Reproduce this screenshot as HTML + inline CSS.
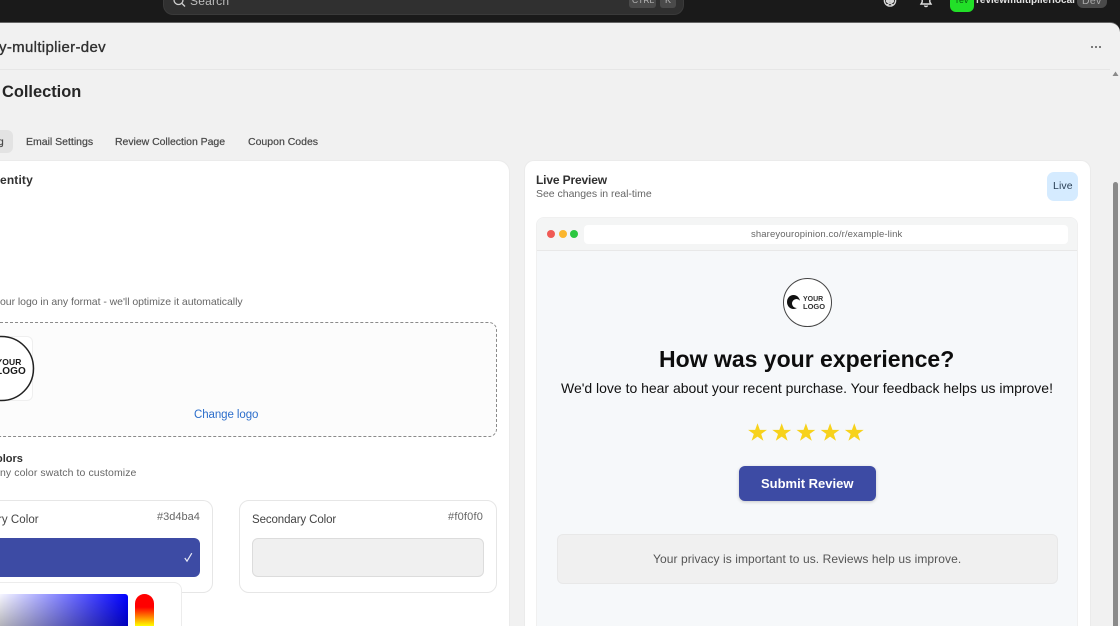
<!DOCTYPE html>
<html><head><meta charset="utf-8"><style>
html,body{margin:0;padding:0;width:1120px;height:626px;overflow:hidden;background:#1a1a1a}
body{position:relative;font-family:"Liberation Sans",sans-serif}
div,span.a{position:absolute;box-sizing:border-box}
.t{position:absolute;white-space:nowrap;line-height:1}
.card{background:#fff;border:1px solid #ebebeb}
.m{-webkit-text-stroke:.2px #484848;color:#484848}
</style></head><body>
<div style="left:0;top:0;width:1120px;height:626px;overflow:hidden;filter:blur(.3px)">
<div style="left:163px;top:0;width:521px;height:15px;background:#303030;border-radius:0 0 10px 10px;border:1px solid #3a3a3a;border-top:0"></div>
<svg style="position:absolute;left:172px;top:0" width="14" height="8" viewBox="0 6 14 8" fill="none" stroke="#d0d0d0" stroke-width="1.3"><circle cx="6.5" cy="6" r="4.5"/><path d="M10 9.5l3 3"/></svg>
<div style="left:190px;top:0;width:40px;height:10px;overflow:hidden"><span class="t" style="left:0;top:-5px;font-size:12px;color:#bdbdbd;letter-spacing:.2px">Search</span></div>
<div style="left:629px;top:0;width:27px;height:8px;background:#4a4a4a;border-radius:0 0 3px 3px;overflow:hidden"><span class="t" style="left:3px;top:-4px;font-size:8.5px;color:#b5b5b5">CTRL</span></div>
<div style="left:660px;top:0;width:16px;height:8px;background:#4a4a4a;border-radius:0 0 3px 3px;overflow:hidden"><span class="t" style="left:5px;top:-4px;font-size:9px;color:#b5b5b5">K</span></div>
<svg style="position:absolute;left:883px;top:0" width="14" height="8" viewBox="0 6 14 8" fill="none" stroke="#d8d8d8" stroke-width="1.4"><circle cx="7" cy="6.5" r="5.6"/><circle cx="5" cy="7" r="1.4" fill="#d8d8d8"/><circle cx="9" cy="7" r="1.4" fill="#d8d8d8"/><path d="M4 11l3-2 3 2"/></svg>
<svg style="position:absolute;left:919px;top:0" width="14" height="8" viewBox="0 6 14 8" fill="none" stroke="#e0e0e0" stroke-width="1.4"><path d="M3.2 5v3L2 10h10L10.800 8V5a3.800 3.800 0 0 0-7.600 0z"/><path d="M5.500 11.500a1.600 1.600 0 0 0 3 0"/></svg>
<div style="left:950px;top:0;width:24px;height:12px;background:#22e028;border-radius:0 0 6px 6px;overflow:hidden"><span class="t" style="left:6px;top:-4px;font-size:9px;color:#0a5c10">rev</span></div>
<div style="left:976px;top:0;width:100px;height:8px;overflow:hidden"><span class="t" style="left:0;top:-4px;font-size:10px;font-weight:bold;color:#e3e3e3">reviewmultiplierlocal</span></div>
<div style="left:1077px;top:0;width:30px;height:8px;background:#4a4a4a;border-radius:0 0 6px 6px;overflow:hidden"><span class="t" style="left:5px;top:-4px;font-size:10.500px;color:#aaa;letter-spacing:.3px">Dev</span></div>

<div style="left:0;top:22px;width:1120px;height:604px;background:#f1f1f1;border-radius:0 10px 0 0;border-top:1px solid #666"></div>
<div style="left:0;top:69px;width:1110px;height:1px;background:#e6e6e6"></div>
<div style="left:0;top:38px;width:120px;height:20px;overflow:hidden"><span class="t" style="left:-1px;top:2px;font-size:15px;color:#303030;-webkit-text-stroke:.35px #303030;letter-spacing:.33px">y-multiplier-dev</span></div>
<div style="left:1091px;top:46px;width:2.300px;height:2.300px;border-radius:50%;background:#555"></div>
<div style="left:1095px;top:46px;width:2.300px;height:2.300px;border-radius:50%;background:#555"></div>
<div style="left:1099px;top:46px;width:2.300px;height:2.300px;border-radius:50%;background:#555"></div>
<span class="t" style="left:2px;top:84px;font-size:16.4px;font-weight:bold;color:#262626">Collection</span>

<div style="left:0;top:130px;width:13px;height:23px;background:#e3e3e3;border-radius:0 6px 6px 0;overflow:hidden"><span class="t m" style="left:-8px;top:7px;font-size:10.5px">ng</span></div>
<span class="t m" style="left:26px;top:137px;font-size:10.5px">Email Settings</span>
<span class="t m" style="left:115px;top:137px;font-size:10.5px;letter-spacing:-.04px">Review Collection Page</span>
<span class="t m" style="left:248px;top:137px;font-size:10.5px">Coupon Codes</span>

<!-- left card -->
<div class="card" style="left:0;top:160px;width:510px;height:466px;border-radius:0 12px 0 0;border-left:0;border-bottom:0"></div>
<span class="t" style="left:0;top:174px;font-size:12px;font-weight:bold;color:#303030;letter-spacing:.15px">entity</span>
<span class="t" style="left:0;top:297px;font-size:10.500px;color:#666;letter-spacing:-.05px">our logo in any format - we'll optimize it automatically</span>
<div style="left:0;top:322px;width:497px;height:115px;background:#fcfcfc;border:1px dashed #8a8a8a;border-left:0;border-radius:0 8px 8px 0"></div>
<div style="left:0;top:336px;width:33px;height:65px;background:#fff;border:1px solid #efefef;border-left:0;border-radius:0 6px 6px 0"></div>
<svg style="position:absolute;left:0;top:335px" width="36" height="67"><circle cx="1.500" cy="33.500" r="32" fill="none" stroke="#222" stroke-width="1.500"/></svg>
<div style="left:0;top:355px;width:34px;height:24px;overflow:hidden">
<span class="t" style="left:-3.500px;top:3px;font-size:8.500px;font-weight:bold;color:#1a1a1a;letter-spacing:.1px">YOUR</span>
<span class="t" style="left:-4px;top:12px;font-size:10px;font-weight:bold;color:#1a1a1a;letter-spacing:.1px">LOGO</span></div>
<span class="t" style="left:194px;top:410px;font-size:11.500px;color:#2c6ecb;letter-spacing:-.08px">Change logo</span>
<div style="left:0;top:452px;width:40px;height:14px;overflow:hidden"><span class="t" style="left:-4px;top:2px;font-size:11px;font-weight:bold;color:#303030">olors</span></div>
<span class="t" style="left:0;top:467.500px;font-size:10.500px;color:#666;letter-spacing:.08px">ny color swatch to customize</span>

<div class="card" style="left:0;top:500px;width:213px;height:93px;border-radius:0 10px 10px 0;border-color:#e6e6e6;border-left:0"></div>
<div style="left:0;top:514px;width:50px;height:14px;overflow:hidden"><span class="t" style="left:-2px;top:1px;font-size:11.500px;color:#444;letter-spacing:.05px">ry Color</span></div>
<span class="t" style="left:157px;top:512px;font-size:11px;color:#666">#3d4ba4</span>
<div style="left:0;top:538px;width:200px;height:39px;background:#3d4ba4;border-radius:0 6px 6px 0"></div>
<svg style="position:absolute;left:183px;top:552px" width="11" height="11" viewBox="0 0 11 11" fill="none" stroke="#e8eaf6" stroke-width="1.200"><path d="M1.800 6l2.200 3.200L8.800 1.200"/></svg>

<div class="card" style="left:239px;top:500px;width:258px;height:93px;border-radius:10px;border-color:#e6e6e6"></div>
<span class="t" style="left:252px;top:515px;font-size:11.500px;color:#444;letter-spacing:-.1px">Secondary Color</span>
<span class="t" style="left:448px;top:512px;font-size:11px;color:#666;letter-spacing:.2px">#f0f0f0</span>
<div style="left:252px;top:538px;width:232px;height:39px;background:#f0f0f0;border:1px solid #dcdcdc;border-radius:6px"></div>

<div style="left:0;top:582px;width:182px;height:44px;background:#fff;border:1px solid #ececec;border-left:0;border-bottom:0;border-radius:0 8px 0 0"></div>
<div style="left:0;top:594px;width:128px;height:32px;border-radius:0 3px 0 0;background:linear-gradient(to bottom,rgba(0,0,0,0),rgba(0,0,0,.27)),linear-gradient(to right,#f6f6ff,#0000ff)"></div>
<div style="left:135px;top:594px;width:19px;height:32px;border-radius:10px 10px 0 0;background:linear-gradient(to bottom,#f00 0,#f00 41%,#ff0 100%)"></div>

<!-- right card -->
<div class="card" style="left:524px;top:160px;width:567px;height:466px;border-radius:10px 10px 0 0;border-bottom:0"></div>
<span class="t" style="left:536px;top:173.500px;font-size:12px;font-weight:bold;color:#303030;letter-spacing:-.15px">Live Preview</span>
<span class="t" style="left:536px;top:189px;font-size:10.500px;color:#666;letter-spacing:-.02px">See changes in real-time</span>
<div style="left:1047px;top:172px;width:31px;height:29px;background:#d5ebff;border-radius:7px"></div>
<span class="t" style="left:1053px;top:181px;font-size:10.500px;color:#2a3f55;letter-spacing:.1px">Live</span>

<div style="left:536px;top:217px;width:542px;height:409px;background:#f6f8fa;border:1px solid #f0f0f0;border-bottom:0;border-radius:8px 8px 0 0"></div>
<div style="left:537px;top:218px;width:540px;height:33px;background:#f4f5f5;border-bottom:1px solid #e8e8e8;border-radius:8px 8px 0 0"></div>
<div style="left:547px;top:230px;width:8px;height:8px;border-radius:50%;background:#f05a55"></div>
<div style="left:559px;top:230px;width:8px;height:8px;border-radius:50%;background:#fbb62e"></div>
<div style="left:570px;top:230px;width:8px;height:8px;border-radius:50%;background:#2cc740"></div>
<div style="left:584px;top:225px;width:484px;height:19px;background:#fff;border-radius:4px"></div>
<span class="t" style="left:751px;top:230px;font-size:9.500px;color:#666;letter-spacing:.12px">shareyouropinion.co/r/example-link</span>

<div style="left:783px;top:278px;width:49px;height:49px;background:#fff;border:1.200px solid #444;border-radius:50%"></div>
<div style="left:787px;top:295px;width:13px;height:14px;background:#111;border-radius:50%"></div>
<div style="left:792px;top:299px;width:9px;height:9px;background:#fff;border-radius:50%"></div>
<span class="t" style="left:803px;top:296px;font-size:7px;font-weight:bold;color:#333">YOUR</span>
<span class="t" style="left:803px;top:302.500px;font-size:7.500px;font-weight:bold;color:#333">LOGO</span>

<span class="t" style="left:659px;top:348px;font-size:23px;font-weight:bold;color:#0d0d0d">How was your experience?</span>
<span class="t" style="left:561px;top:381px;font-size:14px;color:#111;letter-spacing:-.01px">We'd love to hear about your recent purchase. Your feedback helps us improve!</span>

<svg style="position:absolute;left:746px;top:421px" width="120" height="22" viewBox="0 0 120 22" fill="#f7d21c"><g transform="translate(.1 .8) scale(.95)"><path d="M12 1.500l2.500 7h7.400l-6 4.400 2.300 7.100-6.200-4.400-6.200 4.400 2.300-7.100-6-4.400h7.400z"/></g><g transform="translate(24.3 .8) scale(.95)"><path d="M12 1.500l2.500 7h7.400l-6 4.400 2.300 7.100-6.200-4.400-6.200 4.400 2.300-7.100-6-4.400h7.400z"/></g><g transform="translate(48.5 .8) scale(.95)"><path d="M12 1.500l2.500 7h7.400l-6 4.400 2.300 7.100-6.200-4.400-6.200 4.400 2.300-7.100-6-4.400h7.400z"/></g><g transform="translate(72.7 .8) scale(.95)"><path d="M12 1.500l2.500 7h7.400l-6 4.400 2.300 7.100-6.200-4.400-6.200 4.400 2.300-7.100-6-4.400h7.400z"/></g><g transform="translate(96.900 .8) scale(.95)"><path d="M12 1.500l2.500 7h7.400l-6 4.400 2.300 7.100-6.200-4.400-6.200 4.400 2.300-7.100-6-4.400h7.400z"/></g></svg>

<div style="left:739px;top:466px;width:137px;height:35px;background:#3d4ba4;border-radius:6px;box-shadow:0 1px 3px rgba(0,0,0,.2)"></div>
<span class="t" style="left:761px;top:477px;font-size:13px;font-weight:bold;color:#fff">Submit Review</span>

<div style="left:557px;top:534px;width:501px;height:50px;background:#f0f0f0;border:1px solid #e8e8e8;border-radius:6px"></div>
<span class="t" style="left:653px;top:553px;font-size:12px;color:#555;letter-spacing:.08px">Your privacy is important to us. Reviews help us improve.</span>

<!-- scrollbar -->
<div style="left:1110px;top:70px;width:10px;height:556px;background:#f1f1f1"></div>
<svg style="position:absolute;left:1112px;top:71px" width="7" height="6"><path d="M3.500 0.500L6.500 5H.5z" fill="#8a8a8a"/></svg>
<div style="left:1113px;top:182px;width:5px;height:444px;background:#8a8a8a;border-radius:3px 3px 0 0"></div>
</div>
</body></html>
